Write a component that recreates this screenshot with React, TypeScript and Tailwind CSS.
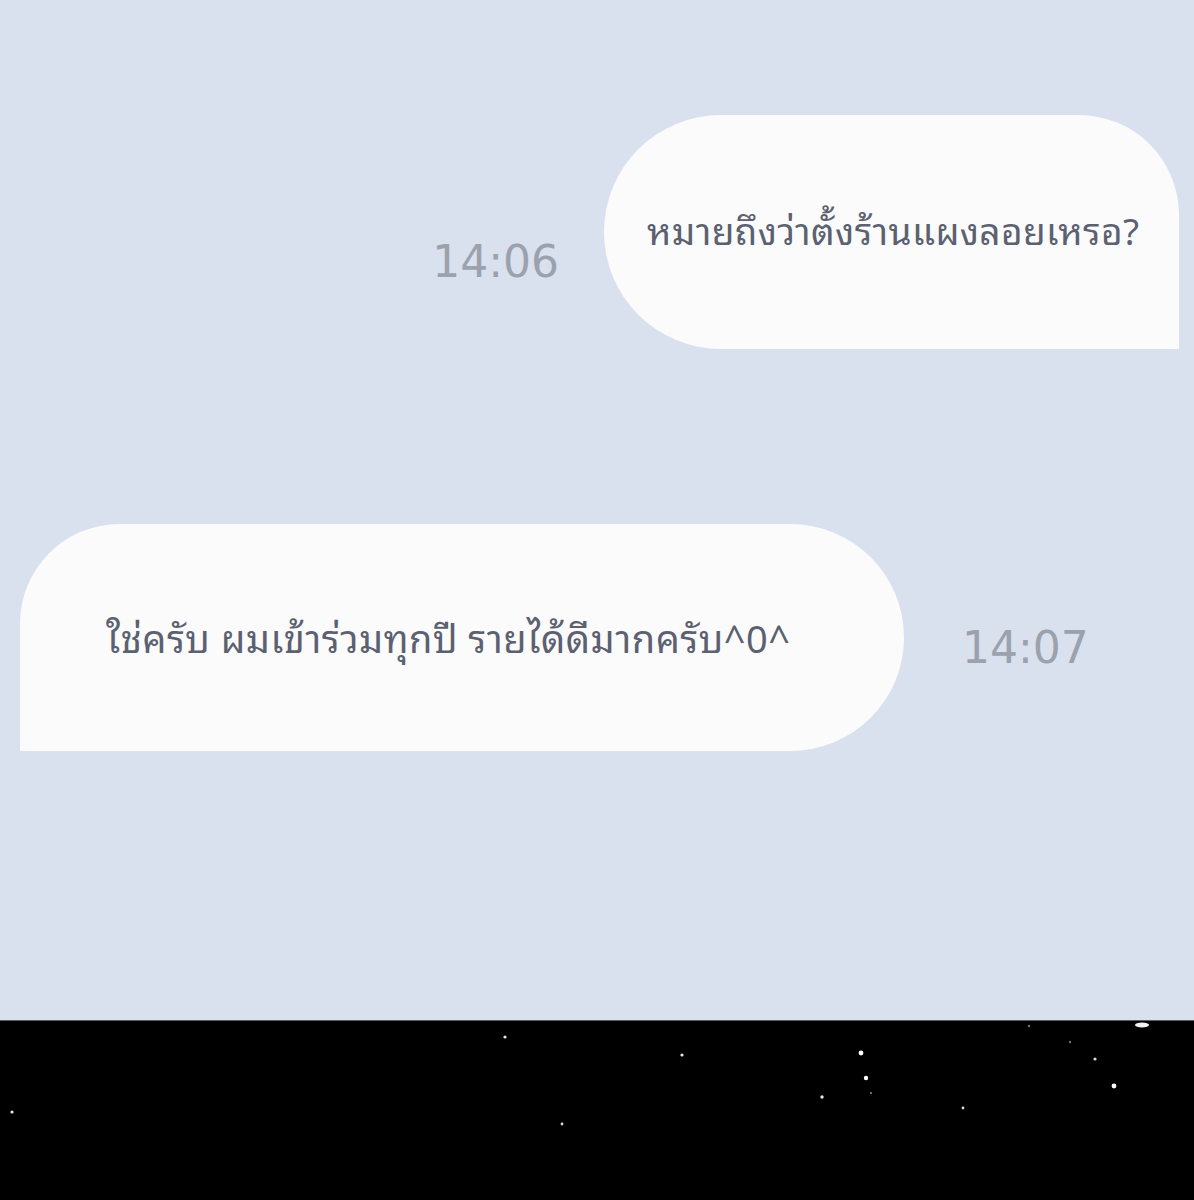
const stars = [
  { x: 505, y: 17, r: 1.6, o: 0.9 },
  { x: 12, y: 92, r: 1.6, o: 0.9 },
  { x: 562, y: 104, r: 1.4, o: 0.85 },
  { x: 682, y: 35, r: 1.6, o: 0.9 },
  { x: 861, y: 33, r: 2.4, o: 1 },
  { x: 866, y: 58, r: 2.2, o: 1 },
  { x: 822, y: 77, r: 1.7, o: 0.9 },
  { x: 871, y: 73, r: 1.1, o: 0.5 },
  { x: 963, y: 88, r: 1.4, o: 0.85 },
  { x: 1029, y: 6, r: 1.2, o: 0.45 },
  { x: 1070, y: 22, r: 1.2, o: 0.45 },
  { x: 1095, y: 39, r: 1.6, o: 0.85 },
  { x: 1114, y: 66, r: 2.4, o: 1 },
]

const thai = '"Noto Sans Thai Looped", "Noto Sans Thai", Tahoma, "DejaVu Sans", sans-serif'
const time = '"DejaVu Sans", Verdana, sans-serif'

function StarField() {
  return (
    <svg width="1194" height="180" viewBox="0 0 1194 180" className="block">
      <defs>
        <radialGradient id="glow" cx="0.5" cy="0" r="0.5">
          <stop offset="0%" stopColor="#ffffff" stopOpacity="0.4" />
          <stop offset="100%" stopColor="#ffffff" stopOpacity="0" />
        </radialGradient>
      </defs>
      <rect x="0" y="0" width="1194" height="1" fill="#5c5c5c" />
      <ellipse cx="1142" cy="0" rx="70" ry="45" fill="url(#glow)" />
      <ellipse cx="1142" cy="5" rx="7" ry="2.5" fill="#f2f2f2" />
      {stars.map((s, i) => (
        <circle key={i} cx={s.x} cy={s.y} r={s.r} fill="#ffffff" opacity={s.o} />
      ))}
    </svg>
  )
}

export default function App() {
  return (
    <div className="flex h-[1200px] w-[1194px] flex-col overflow-hidden bg-[#d9e0ee]">
      <div className="h-[1020px] shrink-0">
        <div className="mt-[115px] flex items-center justify-end pr-[15px]">
          <span
            className="mr-[45px] mt-[60px] text-[44px] leading-none text-[#9ba2ae]"
            style={{ fontFamily: time }}
          >
            14:06
          </span>
          <div className="flex h-[234px] w-[575px] items-center rounded-tl-[117px] rounded-bl-[117px] rounded-tr-[100px] bg-[#fbfbfc] pb-[6px] pl-[43px]">
            <p className="text-[37px] tracking-[0.4px] text-[#5b6170]" style={{ fontFamily: thai }}>
              หมายถึงว่าตั้งร้านแผงลอยเหรอ?
            </p>
          </div>
        </div>

        <div className="mt-[175px] flex items-center pl-[20px]">
          <div className="flex h-[227px] w-[884px] items-center rounded-tl-[100px] rounded-r-[114px] bg-[#fbfbfc] pb-[5px] pl-[86px]">
            <p className="text-[38px] tracking-[0.5px] text-[#5b6170]" style={{ fontFamily: thai }}>
              ใช่ครับ ผมเข้าร่วมทุกปี รายได้ดีมากครับ^0^
            </p>
          </div>
          <span
            className="ml-[58px] mt-[21px] text-[44px] leading-none text-[#9ba2ae]"
            style={{ fontFamily: time }}
          >
            14:07
          </span>
        </div>
      </div>

      <div className="h-[180px] shrink-0 bg-black">
        <StarField />
      </div>
    </div>
  )
}
